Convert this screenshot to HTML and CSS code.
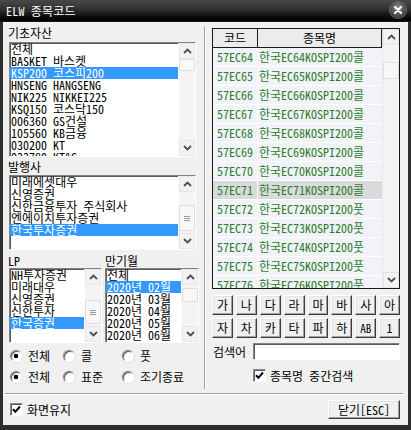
FILE: index.html
```html
<!DOCTYPE html>
<html lang="ko">
<head>
<meta charset="utf-8">
<title>ELW 종목코드</title>
<link rel="stylesheet" href="styles.css">
</head>
<body>
<div class="window">
  <div class="titlebar">
    <span class="title">ELW 종목코드</span>
    <span class="close-btn"><svg width="8" height="8" viewBox="0 0 8 8"><path d="M1 1L7 7M7 1L1 7" stroke="#fff" stroke-width="2" stroke-linecap="round"/></svg></span>
  </div>

  <div class="client">
    <div class="panes">
      <!-- filters -->
      <div class="left-pane">
        <div class="caption">기초자산</div>
        <div class="listbox lb-asset">
          <ul class="items">
            <li>전체</li>
            <li>BASKET 바스켓</li>
            <li class="sel">KSP200 코스피200</li>
            <li>HNSENG HANGSENG</li>
            <li>NIK225 NIKKEI225</li>
            <li>KSQ150 코스닥150</li>
            <li>006360 GS건설</li>
            <li>105560 KB금융</li>
            <li>030200 KT</li>
            <li>033780 KT&amp;G</li>
          </ul>
          <div class="vscroll">
            <div class="sb-btn"><svg width="9" height="6" viewBox="0 0 9 6"><path d="M1 5L4.5 1.5L8 5" fill="none" stroke="#4a4f57" stroke-width="1.8"/></svg></div>
            <div class="sb-track"><div class="sb-thumb" style="margin-top:0;height:12px"></div></div>
            <div class="sb-btn"><svg width="9" height="6" viewBox="0 0 9 6"><path d="M1 1L4.5 4.5L8 1" fill="none" stroke="#4a4f57" stroke-width="1.8"/></svg></div>
          </div>
        </div>

        <div class="caption cap-issuer">발행사</div>
        <div class="listbox lb-issuer">
          <ul class="items">
            <li>미래에셋대우</li>
            <li>신영증권</li>
            <li>신한금융투자 주식회사</li>
            <li>엔에이치투자증권</li>
            <li class="sel">한국투자증권</li>
          </ul>
          <div class="vscroll">
            <div class="sb-btn"><svg width="9" height="6" viewBox="0 0 9 6"><path d="M1 5L4.5 1.5L8 5" fill="none" stroke="#4a4f57" stroke-width="1.8"/></svg></div>
            <div class="sb-track"><div class="sb-thumb grip" style="margin-top:13px;height:26px"><i></i><i></i><i></i></div></div>
            <div class="sb-btn"><svg width="9" height="6" viewBox="0 0 9 6"><path d="M1 1L4.5 4.5L8 1" fill="none" stroke="#4a4f57" stroke-width="1.8"/></svg></div>
          </div>
        </div>

        <div class="pair">
          <div class="col col-lp">
            <div class="caption">LP</div>
            <div class="listbox lb-small">
              <ul class="items">
                <li>NH투자증권</li>
                <li>미래대우</li>
                <li>신영증권</li>
                <li>신한투자</li>
                <li class="sel">한국증권</li>
              </ul>
              <div class="vscroll">
                <div class="sb-btn"><svg width="9" height="6" viewBox="0 0 9 6"><path d="M1 5L4.5 1.5L8 5" fill="none" stroke="#4a4f57" stroke-width="1.8"/></svg></div>
                <div class="sb-track"><div class="sb-thumb grip" style="margin-top:15px;height:24px"><i></i><i></i><i></i></div></div>
                <div class="sb-btn"><svg width="9" height="6" viewBox="0 0 9 6"><path d="M1 1L4.5 4.5L8 1" fill="none" stroke="#4a4f57" stroke-width="1.8"/></svg></div>
              </div>
            </div>
          </div>
          <div class="col col-month">
            <div class="caption">만기월</div>
            <div class="listbox lb-small">
              <ul class="items">
                <li>전체</li>
                <li class="sel">2020년 02월</li>
                <li>2020년 03월</li>
                <li>2020년 04월</li>
                <li>2020년 05월</li>
                <li>2020년 06월</li>
              </ul>
              <div class="vscroll">
                <div class="sb-btn"><svg width="9" height="6" viewBox="0 0 9 6"><path d="M1 5L4.5 1.5L8 5" fill="none" stroke="#4a4f57" stroke-width="1.8"/></svg></div>
                <div class="sb-track"><div class="sb-thumb" style="margin-top:3px;height:14px"></div></div>
                <div class="sb-btn"><svg width="9" height="6" viewBox="0 0 9 6"><path d="M1 1L4.5 4.5L8 1" fill="none" stroke="#4a4f57" stroke-width="1.8"/></svg></div>
              </div>
            </div>
          </div>
        </div>

        <div class="radio-row">
          <label class="opt"><span class="radio on"></span>전체</label>
          <label class="opt"><span class="radio"></span>콜</label>
          <label class="opt"><span class="radio"></span>풋</label>
        </div>
        <div class="radio-row">
          <label class="opt"><span class="radio on"></span>전체</label>
          <label class="opt"><span class="radio"></span>표준</label>
          <label class="opt"><span class="radio"></span>조기종료</label>
        </div>
      </div>

      <!-- code list -->
      <div class="right-pane">
        <div class="grid-box">
          <div class="grid-body">
            <div class="grid-head">
              <div class="hc hc-code">코드</div>
              <div class="hc hc-name">종목명</div>
            </div>
            <div class="row"><span class="c-code">57EC64</span><span class="c-name">한국EC64KOSPI200콜</span></div>
            <div class="row"><span class="c-code">57EC65</span><span class="c-name">한국EC65KOSPI200콜</span></div>
            <div class="row"><span class="c-code">57EC66</span><span class="c-name">한국EC66KOSPI200콜</span></div>
            <div class="row"><span class="c-code">57EC67</span><span class="c-name">한국EC67KOSPI200콜</span></div>
            <div class="row"><span class="c-code">57EC68</span><span class="c-name">한국EC68KOSPI200콜</span></div>
            <div class="row"><span class="c-code">57EC69</span><span class="c-name">한국EC69KOSPI200콜</span></div>
            <div class="row"><span class="c-code">57EC70</span><span class="c-name">한국EC70KOSPI200콜</span></div>
            <div class="row cur"><span class="c-code">57EC71</span><span class="c-name">한국EC71KOSPI200콜</span></div>
            <div class="row"><span class="c-code">57EC72</span><span class="c-name">한국EC72KOSPI200풋</span></div>
            <div class="row"><span class="c-code">57EC73</span><span class="c-name">한국EC73KOSPI200풋</span></div>
            <div class="row"><span class="c-code">57EC74</span><span class="c-name">한국EC74KOSPI200풋</span></div>
            <div class="row"><span class="c-code">57EC75</span><span class="c-name">한국EC75KOSPI200풋</span></div>
            <div class="row"><span class="c-code">57EC76</span><span class="c-name">한국EC76KOSPI200풋</span></div>
          </div>
          <div class="vscroll grid-scroll">
            <div class="sb-btn"><svg width="9" height="6" viewBox="0 0 9 6"><path d="M1 5L4.5 1.5L8 5" fill="none" stroke="#4a4f57" stroke-width="1.8"/></svg></div>
            <div class="sb-track"><div class="sb-thumb" style="margin-top:17px;height:17px"></div></div>
            <div class="sb-btn"><svg width="9" height="6" viewBox="0 0 9 6"><path d="M1 1L4.5 4.5L8 1" fill="none" stroke="#4a4f57" stroke-width="1.8"/></svg></div>
          </div>
        </div>

        <div class="keypad">
          <button class="btn key">가</button>
          <button class="btn key">나</button>
          <button class="btn key">다</button>
          <button class="btn key">라</button>
          <button class="btn key">마</button>
          <button class="btn key">바</button>
          <button class="btn key">사</button>
          <button class="btn key">아</button>
          <button class="btn key">자</button>
          <button class="btn key">차</button>
          <button class="btn key">카</button>
          <button class="btn key">타</button>
          <button class="btn key">파</button>
          <button class="btn key">하</button>
          <button class="btn key key-ab">AB</button>
          <button class="btn key">1</button>
        </div>

        <div class="search-row">
          <span class="search-label">검색어</span>
          <span class="textbox"></span>
        </div>
        <label class="check-row mid-search">
          <span class="checkbox"><svg width="9" height="9" viewBox="0 0 9 9"><path d="M1 4.2L3.4 6.8L8 1.5" fill="none" stroke="#000" stroke-width="2"/></svg></span>
          종목명 중간검색
        </label>
      </div>
    </div>

    <div class="separator"></div>

    <div class="footer">
      <label class="check-row">
        <span class="checkbox"><svg width="9" height="9" viewBox="0 0 9 9"><path d="M1 4.2L3.4 6.8L8 1.5" fill="none" stroke="#000" stroke-width="2"/></svg></span>
        화면유지
      </label>
      <button class="btn close-action">닫기[ESC]</button>
    </div>
  </div>
</div>
</body>
</html>
```

FILE: styles.css
```css
* {
  box-sizing: border-box;
}

html,
body {
  margin: 0;
  padding: 0;
}

body {
  width: 411px;
  height: 430px;
  overflow: hidden;
  background: #2a2a2a;
  font-family: "Noto Sans Mono CJK KR", "Noto Sans CJK KR", "DejaVu Sans Mono", monospace;
  font-feature-settings: "hwid" 1;
  font-size: 12px;
  color: #000;
}

ul {
  list-style: none;
  margin: 0;
  padding: 0;
}

button {
  font: inherit;
  color: inherit;
  padding: 0;
  margin: 0;
}

/* window frame */
.window {
  width: 411px;
  height: 430px;
  display: flex;
  flex-direction: column;
  background: #2d2d2d;
}

.titlebar {
  height: 22px;
  flex: none;
  display: flex;
  align-items: center;
  justify-content: space-between;
  padding: 0 5px 0 6px;
  background: linear-gradient(#484848 0%, #363636 35%, #0a0a0a 80%, #000 92%, #1c1c1c 100%);
}

.title {
  color: #fff;
  font-size: 12px;
  line-height: 14px;
  letter-spacing: 0.2px;
}

.close-btn {
  width: 16px;
  height: 16px;
  margin-top: -2px;
  border-radius: 50%;
  display: grid;
  place-items: center;
  background: radial-gradient(circle at 50% 35%, #8c8c8c 0%, #5a5a5a 45%, #2e2e2e 100%);
  box-shadow: 0 0 0 1px #6a6a6a;
}

.client {
  height: 403px;
  margin: 0 3px;
  background: #f0f0f0;
  padding: 4px 8px 0 5px;
  display: flex;
  flex-direction: column;
}

.panes {
  display: flex;
  align-items: flex-start;
}

/* left side: filter lists */
.left-pane {
  width: 197px;
  flex: none;
  padding-bottom: 4px;
  border-right: 1px solid #a0a0a0;
  box-shadow: 1px 0 0 #fff;
  margin-right: 1px;
}

.caption {
  height: 14px;
  line-height: 14px;
  margin-bottom: 2px;
  white-space: nowrap;
}

.cap-issuer {
  margin-bottom: 1px;
}

.listbox {
  display: flex;
  margin-left: 1px;
  background: #fff;
  border: 1px solid;
  border-color: #828282 #fff #fff #828282;
  box-shadow: inset 1px 1px 0 #5a5a5a;
  overflow: hidden;
}

.lb-asset {
  width: 187px;
  height: 115px;
  margin-bottom: 3px;
}

.lb-issuer {
  width: 187px;
  height: 75px;
  margin-bottom: 4px;
}

.items {
  flex: 1;
  min-width: 0;
  overflow: hidden;
}

.items li {
  height: 12px;
  line-height: 12px;
  padding-left: 1px;
  white-space: nowrap;
}

.items li.sel {
  background: #3399ff;
  color: #fff;
}

/* scrollbars */
.vscroll {
  width: 17px;
  flex: none;
  display: flex;
  flex-direction: column;
  background: #f4f4f4;
  border-left: 1px solid #fbfbfb;
}

.sb-btn {
  height: 16px;
  flex: none;
  display: grid;
  place-items: center;
  background: #f2f2f2;
  border: 1px solid #e6e6e6;
}

.sb-track {
  flex: 1;
  display: flex;
  flex-direction: column;
}

.sb-thumb {
  flex: none;
  background: #f7f7f7;
  border: 1px solid #dedede;
  border-radius: 1px;
}

.sb-thumb.grip {
  display: flex;
  flex-direction: column;
  align-items: center;
  justify-content: center;
  gap: 1px;
}

.sb-thumb.grip i {
  display: block;
  width: 6px;
  height: 1px;
  background: #9c9c9c;
}

.pair {
  display: flex;
  gap: 3px;
}

.col-lp {
  width: 94px;
  flex: none;
}

.col-lp .listbox {
  width: 93px;
}

.col-month {
  width: 94px;
  flex: none;
}

.col-month .listbox {
  width: 94px;
  margin-left: 0;
}

.col-lp .caption,
.col-month .caption {
  margin-bottom: 0;
}

.lb-small {
  height: 75px;
}

.radio-row {
  display: grid;
  grid-template-columns: 53px 59px auto;
  height: 16px;
  margin-top: 5px;
  padding-left: 2px;
}

.opt {
  display: flex;
  align-items: center;
  gap: 6px;
  white-space: nowrap;
  line-height: 16px;
}

.radio {
  width: 12px;
  height: 12px;
  flex: none;
  border-radius: 50%;
  background: #fff;
  border: 1px solid;
  border-color: #8a8a8a #fff #fff #8a8a8a;
  box-shadow: inset 1px 1px 0 #5a5a5a, 0 0 0 0.5px #d0d0d0;
}

.radio.on {
  background: radial-gradient(circle, #000 0 2px, #fff 2.6px);
}

/* right side: code grid and search */
.right-pane {
  width: 188px;
  flex: none;
  margin-left: 6px;
  padding-top: 2px;
}

.grid-box {
  height: 261px;
  display: flex;
  border: 1px solid #1a1a1a;
  background: #fff;
  overflow: hidden;
}

.grid-body {
  flex: 1;
  min-width: 0;
  overflow: hidden;
  background: #f2f2f9;
}

.grid-head {
  display: flex;
  height: 19px;
  border-bottom: 1px solid #1a1a1a;
  border-right: 1px solid #1a1a1a;
  background: #ececec;
}

.hc {
  line-height: 18px;
  text-align: center;
}

.hc-code {
  width: 45px;
  border-right: 1px solid #1a1a1a;
}

.hc-name {
  flex: 1;
}

.row {
  display: flex;
  height: 19px;
  line-height: 18px;
  border-bottom: 1px solid #fff;
  color: #2c7d2c;
  white-space: nowrap;
}

.row.cur {
  background: #dadada;
}

.c-code {
  width: 45px;
  padding-left: 4px;
  border-right: 1px solid #fff;
}

.c-name {
  padding-left: 1px;
}

.grid-scroll {
  border-left: 1px solid #e8e8e8;
}

.keypad {
  display: grid;
  grid-template-columns: repeat(8, 1fr);
  gap: 3px 3px;
  margin-top: 6px;
}

.btn {
  display: grid;
  place-items: center;
  background: #f0f0f0;
  border: 1px solid;
  border-color: #fff #3c3c3c #3c3c3c #fff;
  box-shadow: inset -1px -1px 0 #a0a0a0, inset 1px 1px 0 #e3e3e3;
  line-height: 1;
}

.key {
  height: 20px;
}

.key-ab {
  font-size: 11px;
}

.search-row {
  display: flex;
  align-items: center;
  gap: 6px;
  margin-top: 5px;
  height: 17px;
  padding-left: 1px;
}

.search-label {
  width: 34px;
  white-space: nowrap;
}

.textbox {
  flex: 1;
  height: 17px;
  background: #fff;
  border: 1px solid;
  border-color: #828282 #fff #fff #828282;
  box-shadow: inset 1px 1px 0 #5a5a5a;
}

.check-row {
  display: flex;
  align-items: center;
  gap: 4px;
  height: 14px;
  white-space: nowrap;
}

.mid-search {
  margin-top: 8px;
  margin-left: 41px;
}

.checkbox {
  width: 13px;
  height: 13px;
  flex: none;
  display: grid;
  place-items: center;
  background: #fff;
  border: 1px solid;
  border-color: #8a8a8a #fff #fff #8a8a8a;
  box-shadow: inset 1px 1px 0 #5a5a5a;
}

/* bottom bar */
.separator {
  height: 2px;
  margin: 4px -3px 0 -3px;
  border-top: 1px solid #a0a0a0;
  border-bottom: 1px solid #fff;
}

.footer {
  display: flex;
  align-items: center;
  justify-content: space-between;
  height: 19px;
  margin-top: 5px;
  padding: 0 0 0 2px;
}

.close-action {
  width: 72px;
  height: 19px;
}
```
